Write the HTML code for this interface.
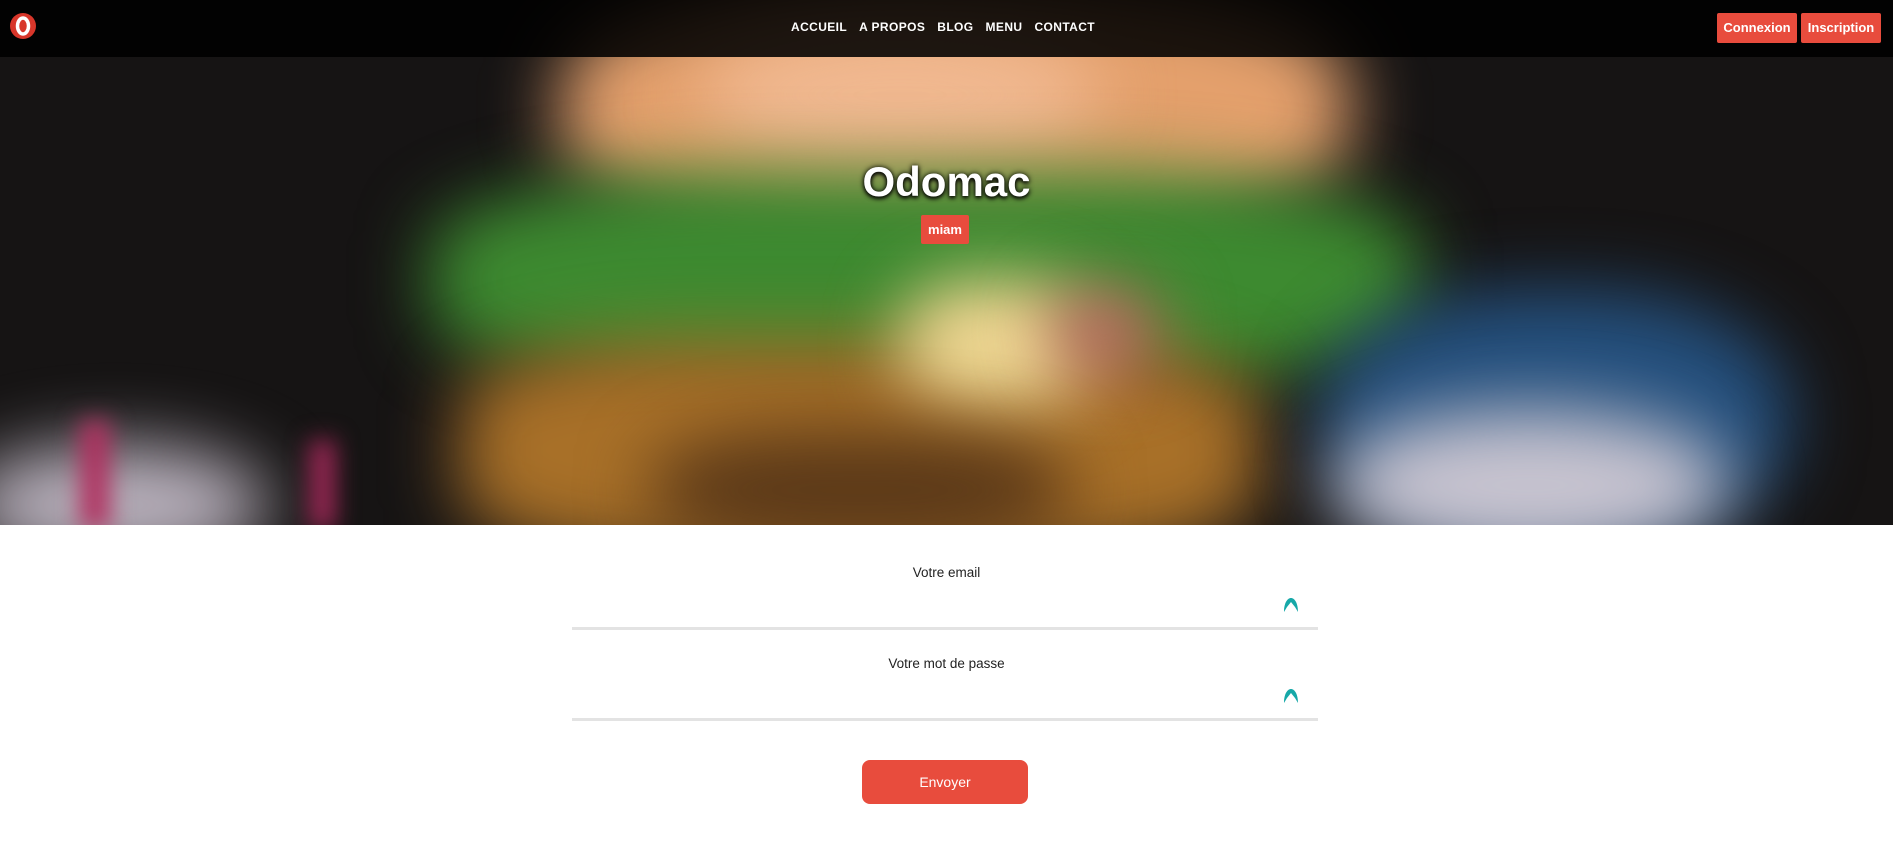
<!DOCTYPE html>
<html><head><meta charset="utf-8"><style>
*{margin:0;padding:0;box-sizing:border-box}
body{width:1893px;height:844px;overflow:hidden;background:#fff;font-family:"Liberation Sans",sans-serif;position:relative}
.hero{position:absolute;left:0;top:0;width:1893px;height:525px;overflow:hidden;background:#161414}
.b{position:absolute;filter:blur(35px)}
.nav{position:absolute;left:0;top:0;width:1893px;height:57px;background:rgba(0,0,0,.88)}
.links{position:absolute;top:20px;left:791px;color:#fff;font-size:12px;font-weight:bold;letter-spacing:.4px;white-space:nowrap}
.links span{margin-right:12px}
.btn{position:absolute;top:13px;height:30px;background:#e84c3d;color:#fff;font-size:13px;font-weight:bold;border-radius:2px;text-align:center;line-height:30px}
.title{position:absolute;top:158px;left:0;width:1893px;text-align:center;color:#fff;font-size:42px;font-weight:bold;text-shadow:0 0 6px rgba(0,0,0,.9),0 2px 4px #000}
.badge{position:absolute;left:921px;top:215px;width:48px;height:29px;background:#e84c3d;color:#fff;font-size:13px;font-weight:bold;text-align:center;line-height:29px;border-radius:2px}
.lab{position:absolute;left:0;width:1893px;text-align:center;font-size:13.5px;color:#222}
.line{position:absolute;left:572px;width:746px;height:3px;background:#e3e3e3}
.ic{position:absolute;left:1283px;width:16px;height:16px}
.send{position:absolute;left:862px;top:760px;width:166px;height:44px;background:#e84c3d;border-radius:8px;color:#fff;font-size:14px;text-align:center;line-height:44px}
</style></head><body>
<div class="hero">
 <div class="b" style="left:560px;top:-20px;width:790px;height:260px;background:#e4a06c;border-radius:40%"></div>
 <div class="b" style="left:700px;top:20px;width:400px;height:150px;background:#f0b890;border-radius:50%"></div>
 <div class="b" style="left:430px;top:170px;width:990px;height:220px;background:#3d8a30;border-radius:35%"></div>
 <div class="b" style="left:460px;top:340px;width:800px;height:220px;background:#a87028;border-radius:30%"></div>
 <div class="b" style="left:900px;top:280px;width:190px;height:130px;background:#f0d894;border-radius:40%"></div>
 <div class="b" style="left:1050px;top:290px;width:110px;height:80px;background:#c06464;border-radius:40%"></div>
 <div class="b" style="left:650px;top:430px;width:420px;height:120px;background:#5a3818;border-radius:40%"></div>
 <div class="b" style="left:1320px;top:290px;width:470px;height:260px;background:#24507e;border-radius:45%"></div>
 <div class="b" style="left:1330px;top:410px;width:400px;height:150px;background:#c8c4d0;border-radius:50%"></div>
 <div class="b" style="left:-40px;top:445px;width:310px;height:120px;background:#bcb4c0;border-radius:50%"></div>
 <div class="b" style="left:80px;top:420px;width:30px;height:110px;background:#b03060;filter:blur(12px)"></div>
 <div class="b" style="left:310px;top:440px;width:25px;height:90px;background:#a02858;filter:blur(12px)"></div>
</div>
<div class="nav">
 <svg style="position:absolute;left:9px;top:12px" width="28" height="28" viewBox="0 0 28 28"><circle cx="14" cy="14" r="13" fill="#d8362a"/><ellipse cx="14" cy="14" rx="5.5" ry="8" fill="none" stroke="#fff" stroke-width="3.5"/></svg>
 <div class="links"><span>ACCUEIL</span><span>A PROPOS</span><span>BLOG</span><span>MENU</span><span style="margin:0">CONTACT</span></div>
 <div class="btn" style="left:1717px;width:80px">Connexion</div>
 <div class="btn" style="left:1801px;width:80px">Inscription</div>
</div>
<div class="title">Odomac</div>
<div class="badge">miam</div>
<div class="lab" style="top:565px">Votre email</div>
<svg class="ic" style="top:597px" viewBox="0 0 16 16"><path d="M1 15 C1 5 5 1 8 1 C11 1 15 5 15 15 L12 10 L8 5 L4 10 Z" fill="#16a8a8"/></svg>
<div class="line" style="top:627px"></div>
<div class="lab" style="top:656px">Votre mot de passe</div>
<svg class="ic" style="top:688px" viewBox="0 0 16 16"><path d="M1 15 C1 5 5 1 8 1 C11 1 15 5 15 15 L12 10 L8 5 L4 10 Z" fill="#16a8a8"/></svg>
<div class="line" style="top:718px"></div>
<div class="send">Envoyer</div>
</body></html>
